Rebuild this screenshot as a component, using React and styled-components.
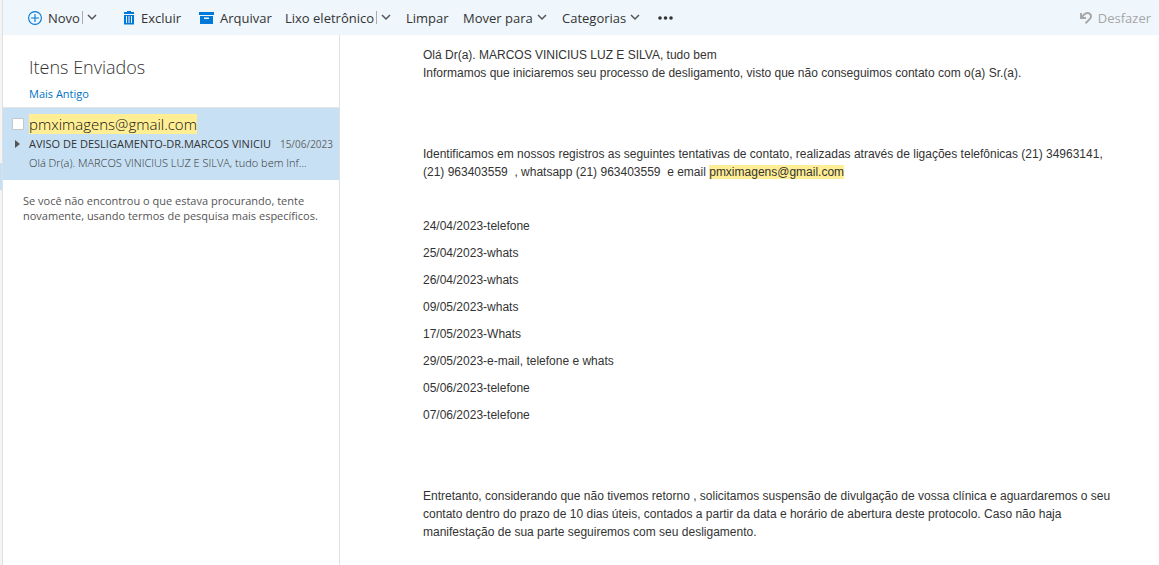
import styled, { createGlobalStyle } from "styled-components";

const GlobalStyle = createGlobalStyle`
  * {
    box-sizing: border-box;
  }
  body {
    margin: 0;
    background: #ffffff;
    font-family: "Open Sans", "Segoe UI", sans-serif;
    color: #333333;
  }
  button {
    padding: 0;
    border: 0;
    background: none;
    font: inherit;
    color: inherit;
    cursor: pointer;
  }
  p, h1, h2 {
    margin: 0;
  }
`;

const Page = styled.div`
  display: flex;
  height: 100vh;
  overflow: hidden;
`;

// borda do painel de pastas
const FolderEdge = styled.div`
  flex: none;
  width: 3px;
  padding-top: 163px;
  background: #f4f4f4;
  border-right: 1px solid #e0e0e0;
`;

const SelectedFolder = styled.div`
  height: 27px;
  background: #c7e0f4;
`;

const Main = styled.div`
  flex: 1;
  min-width: 0;
  display: flex;
  flex-direction: column;
`;

const Toolbar = styled.div`
  flex: none;
  display: flex;
  align-items: center;
  height: 35px;
  padding: 0 8px 0 25px;
  background: #eff6fc;
  font-size: 13px;
  line-height: 18px;
`;

const Command = styled.div`
  display: flex;
  align-items: center;
  width: ${(props) => props.$width}px;
`;

const ToolButton = styled.button`
  display: flex;
  align-items: center;
  gap: ${(props) => props.$gap || 6}px;
  white-space: nowrap;

  &:disabled {
    margin-left: auto;
    color: #a6a6a6;
    cursor: default;
  }
`;

const Divider = styled.span`
  width: 1px;
  height: 13px;
  margin: 0 4px 0 2px;
  background: #b3a8a4;
`;

const Content = styled.div`
  flex: 1;
  min-height: 0;
  display: flex;
`;

const MessageList = styled.section`
  flex: none;
  width: 337px;
  border-right: 1px solid #e0e0e0;
`;

const ListHeader = styled.header`
  height: 73px;
  padding: 19px 26px 0;
  border-bottom: 1px solid #e5e5e5;
`;

const Title = styled.h1`
  font-size: 18px;
  font-weight: 300;
  line-height: 26px;
  color: #333333;
`;

const SortLink = styled.a`
  display: block;
  margin-top: 6px;
  font-size: 11px;
  line-height: 16px;
  color: #0072c6;
  text-decoration: none;
`;

const MessageItem = styled.article`
  display: grid;
  grid-template-columns: 26px 1fr;
  align-items: center;
  height: 72px;
  padding: 6px 6px 9px 0;
  background: #c7e0f4;
`;

const SelectBox = styled.input`
  appearance: none;
  width: 12px;
  height: 12px;
  margin: 0 0 0 9px;
  background: #ffffff;
  border: 1px solid #c8c8c8;
`;

const Sender = styled.h2`
  font-size: 15px;
  font-weight: 300;
  line-height: 20px;
  color: #111111;
`;

const Mark = styled.mark`
  background: #ffee94;
  color: inherit;
`;

const ExpandButton = styled.button`
  display: flex;
  padding-left: 12px;
`;

const SubjectRow = styled.div`
  display: flex;
  justify-content: space-between;
  font-size: 11px;
  line-height: 20px;
  white-space: nowrap;
`;

const MessageDate = styled.time`
  font-size: 10px;
  color: #666666;
`;

const Preview = styled.p`
  grid-column: 2;
  font-size: 11px;
  font-weight: 300;
  line-height: 16px;
  color: #333333;
`;

const Hint = styled.p`
  padding: 13px 12px 0 20px;
  font-size: 11px;
  line-height: 15px;
  color: #555555;
`;

const Reading = styled.main`
  flex: 1;
  min-width: 0;
  padding: 11px 40px 0 83px;
  font-family: "Liberation Sans", Arial, sans-serif;
  font-size: 12px;
  line-height: 18px;
`;

const Paragraph = styled.p`
  margin-bottom: ${(props) => props.$after || 9}px;
`;

const ChevronDown = () => (
  <svg width="10" height="7" viewBox="0 0 10 7" fill="none" stroke="#555555" strokeWidth="1.5">
    <path d="M1 1l4 4 4-4" />
  </svg>
);

const PlusIcon = () => (
  <svg width="14" height="14" viewBox="0 0 14 14" fill="none" stroke="#0078d7" strokeWidth="1.1">
    <circle cx="7" cy="7" r="6.4" />
    <path d="M7 3v8M3 7h8" />
  </svg>
);

const TrashIcon = () => (
  <svg width="12" height="14" viewBox="0 0 12 14">
    <path fill="#0078d7" d="M4 0h4v1h3v2H1V1h3zM1 4h10v9.500H1z" />
    <path stroke="#eff6fc" d="M3.500 5v7M6 5v7M8.500 5v7" />
  </svg>
);

const ArchiveIcon = () => (
  <svg width="15" height="12" viewBox="0 0 15 12">
    <path fill="#0078d7" d="M0 0h15v3H0zM1 4h13v8H1z" />
    <path fill="#eff6fc" d="M5 5.500h5V7H5z" />
  </svg>
);

const MoreIcon = () => (
  <svg width="15" height="4" viewBox="0 0 15 4" fill="#333333">
    <circle cx="2" cy="2" r="1.800" />
    <circle cx="7.500" cy="2" r="1.800" />
    <circle cx="13" cy="2" r="1.800" />
  </svg>
);

const UndoIcon = () => (
  <svg width="12" height="12" viewBox="0 0 12 12" fill="none" stroke="#a6a6a6" strokeWidth="1.900">
    <path d="M1 1v5h5M1.500 5.500L4.500 2.200C7-.2 11 1.200 11 4.500C11 6.500 9 8 5.500 11.200" />
  </svg>
);

const ExpandIcon = () => (
  <svg width="5" height="8" viewBox="0 0 5 8" fill="#555555">
    <path d="M0 0l5 4-5 4z" />
  </svg>
);

const contacts = [
  "24/04/2023-telefone",
  "25/04/2023-whats",
  "26/04/2023-whats",
  "09/05/2023-whats",
  "17/05/2023-Whats",
  "29/05/2023-e-mail, telefone e whats",
  "05/06/2023-telefone",
  "07/06/2023-telefone",
];

const App = () => {
  return (
    <>
      <GlobalStyle />
      <Page>
        <FolderEdge>
          <SelectedFolder />
        </FolderEdge>
        <Main>
          <Toolbar>
            <Command $width={95}>
              <ToolButton><PlusIcon />Novo</ToolButton>
              <Divider />
              <ToolButton aria-label="Mais opções de Novo"><ChevronDown /></ToolButton>
            </Command>
            <Command $width={76}>
              <ToolButton><TrashIcon />Excluir</ToolButton>
            </Command>
            <Command $width={86}>
              <ToolButton><ArchiveIcon />Arquivar</ToolButton>
            </Command>
            <Command $width={121}>
              <ToolButton>Lixo eletrônico</ToolButton>
              <Divider />
              <ToolButton aria-label="Mais opções de Lixo eletrônico"><ChevronDown /></ToolButton>
            </Command>
            <Command $width={57}>
              <ToolButton>Limpar</ToolButton>
            </Command>
            <Command $width={99}>
              <ToolButton $gap={4}>Mover para<ChevronDown /></ToolButton>
            </Command>
            <Command $width={96}>
              <ToolButton $gap={4}>Categorias<ChevronDown /></ToolButton>
            </Command>
            <ToolButton aria-label="Mais comandos"><MoreIcon /></ToolButton>
            <ToolButton disabled><UndoIcon />Desfazer</ToolButton>
          </Toolbar>
          <Content>
            <MessageList>
              <ListHeader>
                <Title>Itens Enviados</Title>
                <SortLink href="#antigo">Mais Antigo</SortLink>
              </ListHeader>
              <MessageItem>
                <SelectBox type="checkbox" aria-label="Selecionar mensagem" />
                <Sender><Mark>pmximagens@gmail.com</Mark></Sender>
                <ExpandButton aria-label="Expandir conversa"><ExpandIcon /></ExpandButton>
                <SubjectRow>
                  <span>AVISO DE DESLIGAMENTO-DR.MARCOS VINICIU</span>
                  <MessageDate dateTime="2023-06-15">15/06/2023</MessageDate>
                </SubjectRow>
                <Preview>Olá Dr(a). MARCOS VINICIUS LUZ E SILVA, tudo bem Inf...</Preview>
              </MessageItem>
              <Hint>
                Se você não encontrou o que estava procurando, tente novamente, usando termos de pesquisa mais específicos.
              </Hint>
            </MessageList>
            <Reading>
              <Paragraph $after={63}>
                Olá Dr(a). MARCOS VINICIUS LUZ E SILVA, tudo bem
                <br />
                Informamos que iniciaremos seu processo de desligamento, visto que não conseguimos contato com o(a) Sr.(a).
              </Paragraph>
              <Paragraph $after={36}>
                Identificamos em nossos registros as seguintes tentativas de contato, realizadas através de ligações telefônicas (21) 34963141, (21) 963403559&nbsp; , whatsapp (21) 963403559&nbsp; e email <Mark>pmximagens@gmail.com</Mark>
              </Paragraph>
              {contacts.map((contact, i) => (
                <Paragraph key={contact} $after={i === contacts.length - 1 ? 63 : 9}>{contact}</Paragraph>
              ))}
              <Paragraph>
                Entretanto, considerando que não tivemos retorno , solicitamos suspensão de divulgação de vossa clínica e aguardaremos o seu contato dentro do prazo de 10 dias úteis, contados a partir da data e horário de abertura deste protocolo. Caso não haja manifestação de sua parte seguiremos com seu desligamento.
              </Paragraph>
            </Reading>
          </Content>
        </Main>
      </Page>
    </>
  );
};

export default App;
